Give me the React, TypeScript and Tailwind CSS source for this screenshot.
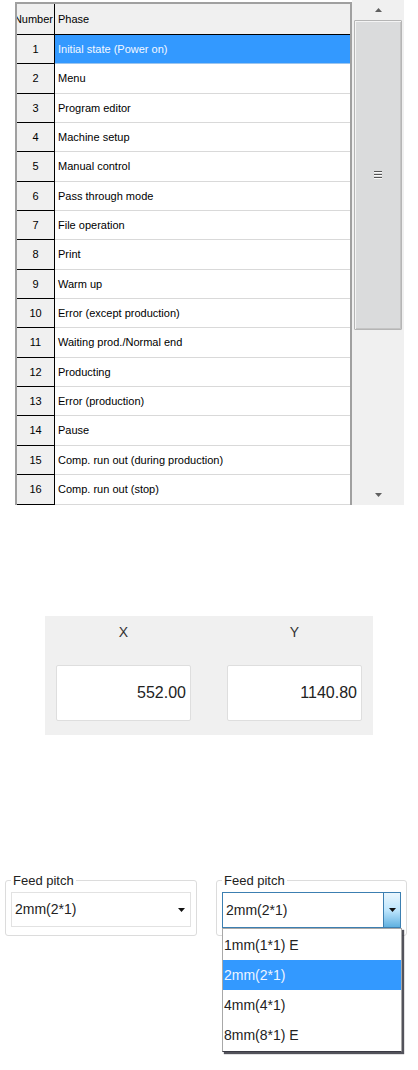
import React from "react";

const rows: string[] = [
  "Initial state (Power on)",
  "Menu",
  "Program editor",
  "Machine setup",
  "Manual control",
  "Pass through mode",
  "File operation",
  "Print",
  "Warm up",
  "Error (except production)",
  "Waiting prod./Normal end",
  "Producting",
  "Error (production)",
  "Pause",
  "Comp. run out (during production)",
  "Comp. run out (stop)",
];

function Tri({ down, color = "#606060" }: { down?: boolean; color?: string }) {
  return (
    <svg width="7" height="4" viewBox="0 0 7 4">
      {down ? (
        <polygon points="0,0 7,0 3.5,4" fill={color} />
      ) : (
        <polygon points="0,4 7,4 3.5,0" fill={color} />
      )}
    </svg>
  );
}

function Table() {
  return (
    <div className="flex h-[505px]">
      <div className="ml-[15px] mt-[2px] w-[337px] h-[503px] overflow-hidden border-l-2 border-t-2 border-r-2 border-[#a0a0a0] bg-white text-[11px] text-black">
        <div className="flex h-[31px] bg-[#f0f0f0] border-b border-black">
          <div className="w-[38px] shrink-0 flex items-center justify-end overflow-hidden whitespace-nowrap border-r border-black pr-[1px]">
            Number
          </div>
          <div className="flex-1 flex items-center pl-[3px]">Phase</div>
        </div>
        {rows.map((r, i) => (
          <div key={i} className="flex h-[29.35px]">
            <div className="w-[38px] shrink-0 flex items-center justify-center bg-[#f0f0f0] border-r border-b border-black">
              {i + 1}
            </div>
            <div
              className={
                i === 0
                  ? "flex-1 flex items-center pl-[3px] bg-[#3399ff] text-[#f4f8ff] border-b border-[#9cc5ee]"
                  : "flex-1 flex items-center pl-[3px] border-b border-[#d9d9d9]"
              }
            >
              {r}
            </div>
          </div>
        ))}
      </div>
      <div className="w-[52px] h-[505px] bg-[#f0f0f0] flex flex-col items-center">
        <div className="h-[20px] flex items-center justify-center">
          <Tri />
        </div>
        <div className="w-[48px] h-[310px] border border-[#b5b5b5] rounded-[1px] bg-[#dadbdc] shadow-[inset_1px_1px_0_#f4f4f4,inset_-1px_-1px_0_#c4c4c4] flex items-center justify-center">
          <div className="flex flex-col gap-[1px]">
            <div className="w-[8px] h-[2px] border-t border-[#555] border-b border-b-[#fafafa]" />
            <div className="w-[8px] h-[2px] border-t border-[#555] border-b border-b-[#fafafa]" />
            <div className="w-[8px] h-[2px] border-t border-[#555] border-b border-b-[#fafafa]" />
          </div>
        </div>
        <div className="flex-1" />
        <div className="h-[20px] flex items-center justify-center">
          <Tri down />
        </div>
      </div>
    </div>
  );
}

function Coords() {
  return (
    <div className="mt-[111px] ml-[45px] w-[328px] h-[119px] bg-[#f0f0f0] px-[11px] grid grid-cols-2 gap-x-[36px]">
      <div className="flex flex-col">
        <div className="h-[16px] mt-[8px] flex items-center justify-center text-[14px] text-[#333]">X</div>
        <div className="mt-[25px] h-[56px] bg-white border border-[#dedede] rounded-[2px] flex items-center justify-end pr-[4px] text-[16px] text-[#222]">
          552.00
        </div>
      </div>
      <div className="flex flex-col">
        <div className="h-[16px] mt-[8px] flex items-center justify-center text-[14px] text-[#333]">Y</div>
        <div className="mt-[25px] h-[56px] bg-white border border-[#dedede] rounded-[2px] flex items-center justify-end pr-[4px] text-[16px] text-[#222]">
          1140.80
        </div>
      </div>
    </div>
  );
}

function FeedPitch() {
  const items = ["1mm(1*1) E", "2mm(2*1)", "4mm(4*1)", "8mm(8*1) E"];
  return (
    <div className="mt-[138px] flex text-[#222]">
      <fieldset className="ml-[5px] w-[192px] border border-[#dcdcdc] rounded-[3px] pb-[7px]">
        <legend className="ml-[5px] px-[2px] text-[13px] leading-[15px]">Feed pitch</legend>
        <div className="mt-[4px] mx-[5px] h-[35px] border border-[#e2e2e2] flex items-center pl-[3px] pr-[5px] text-[14px]">
          <span className="flex-1">2mm(2*1)</span>
          <Tri down color="#111" />
        </div>
      </fieldset>
      <fieldset className="ml-[19px] w-[191px] border border-[#dcdcdc] rounded-[3px] pb-[7px] relative">
        <legend className="ml-[5px] px-[2px] text-[13px] leading-[15px]">Feed pitch</legend>
        <div className="mt-[4px] mx-[5px] h-[36px] border border-[#3c7fb1] flex items-stretch text-[14px] bg-white">
          <span className="flex-1 flex items-center pl-[3px]">2mm(2*1)</span>
          <div className="w-[17px] border-l border-[#3c7fb1] bg-gradient-to-b from-[#eaf6fd] via-[#bee6fd] to-[#5fb1e0] flex items-center justify-center">
            <Tri down color="#111" />
          </div>
        </div>
        <div className="absolute left-[5px] top-[40px] w-[180px] bg-white border border-[#a8a8a8] border-b-[#3a3a44] py-[1px] shadow-[2px_2px_1px_rgba(40,40,50,0.8)] text-[14px] z-10">
          {items.map((it, i) => (
            <div
              key={i}
              className={
                i === 1
                  ? "h-[30px] flex items-center pl-[1px] bg-[#3399ff] text-[#eef5ff]"
                  : "h-[30px] flex items-center pl-[1px]"
              }
            >
              {it}
            </div>
          ))}
        </div>
      </fieldset>
    </div>
  );
}

export default function App() {
  return (
    <div className="w-[418px] h-[1070px] bg-white overflow-hidden font-['Liberation_Sans',Arial,sans-serif]">
      <Table />
      <Coords />
      <FeedPitch />
    </div>
  );
}
